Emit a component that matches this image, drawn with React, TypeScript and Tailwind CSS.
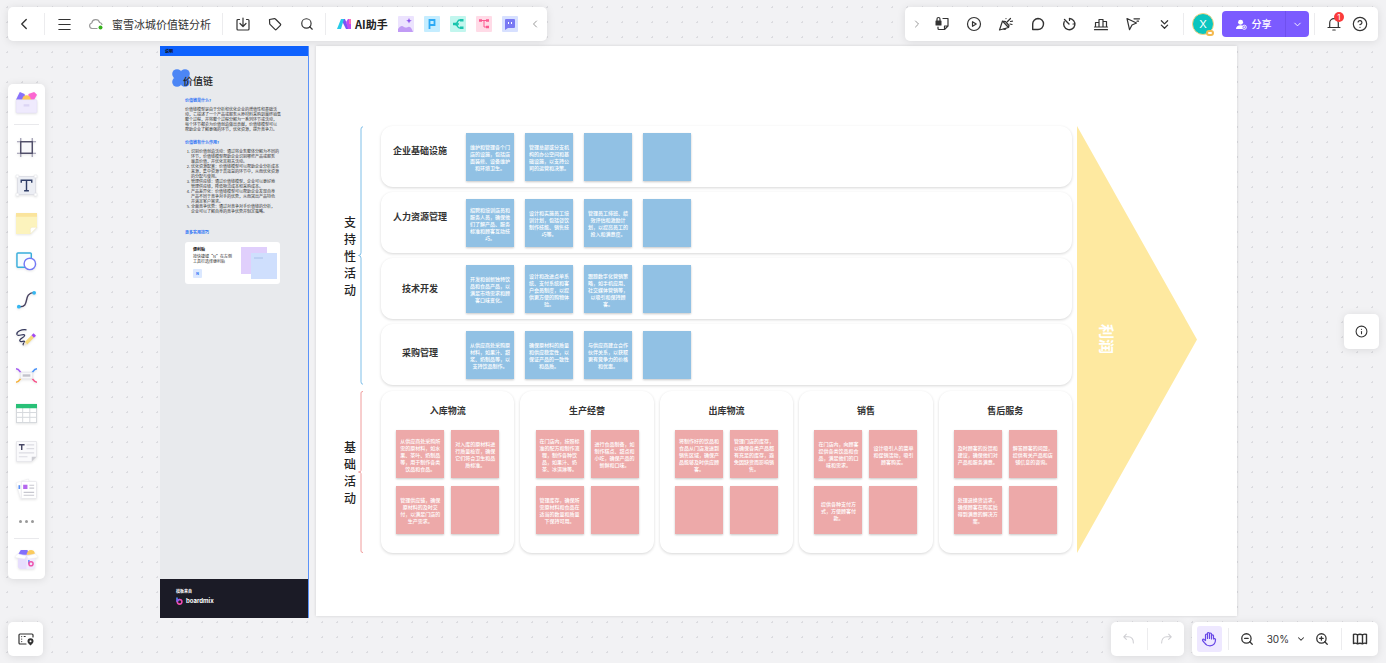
import type { ReactNode } from 'react';
import {
  ChevronDown,
  ChevronLeft,
  ChevronRight,
  ChevronsDown,
  CircleHelp,
  Info,
  Menu,
  Search,
  ZoomIn,
  ZoomOut,
} from 'lucide-react';

const supportRows = [
  {
    title: '企业基础设施',
    pad: 'pt-[18px]',
    notes: [
      '维护和管理各个门\n店的设施，包括店\n面装修、设备维护\n和环境卫生。',
      '管理总部或分支机\n构的办公空间和基\n础设施，以支持公\n司的运营和决策。',
      '',
      '',
    ],
  },
  {
    title: '人力资源管理',
    pad: 'pt-[18px]',
    notes: [
      '招聘和培训店员和\n服务人员，确保他\n们了解产品、服务\n标准和顾客互动技\n巧。',
      '设计和实施员工培\n训计划，包括餐饮\n制作技能、销售技\n巧等。',
      '管理员工排班、绩\n效评估和激励计\n划，以提高员工的\n投入和满意度。',
      '',
    ],
  },
  {
    title: '技术开发',
    pad: 'pt-[24px]',
    notes: [
      '开发和创新独特饮\n品和食品产品，以\n满足市场需求和顾\n客口味变化。',
      '设计和改进点单系\n统、支付系统和客\n户会员制度，以提\n供更方便的购物体\n验。',
      '跟踪数字化营销策\n略，如手机应用、\n社交媒体营销等，\n以吸引和保持顾\n客。',
      '',
    ],
  },
  {
    title: '采购管理',
    pad: 'pt-[22px]',
    notes: [
      '从供应商处采购原\n材料，如果汁、甜\n浆、奶制品等，以\n支持饮品制作。',
      '确保原材料的质量\n和供应稳定性，以\n保证产品的一致性\n和品质。',
      '与供应商建立合作\n伙伴关系，以获取\n更有竞争力的价格\n和优惠。',
      '',
    ],
  },
];

const basicColumns = [
  {
    title: '入库物流',
    notes: [
      '从供应商处采购所\n需的原材料，如水\n果、茶叶、奶制品\n等，用于制作各类\n饮品和食品。',
      '对入库的原材料进\n行质量检查，确保\n它们符合卫生和品\n质标准。',
      '管理供应链，确保\n原材料的及时交\n付，以满足门店的\n生产需求。',
      '',
    ],
  },
  {
    title: '生产经营',
    notes: [
      '在门店内，按照标\n准的配方和制作流\n程，制作各种饮\n品，如果汁、奶\n茶、冰淇淋等。',
      '进行食品制备，如\n制作糕点、甜点和\n小吃，确保产品的\n新鲜和口味。',
      '管理库存，确保所\n需原材料和食品在\n适当的数量和质量\n下保持可用。',
      '',
    ],
  },
  {
    title: '出库物流',
    notes: [
      '将制作好的饮品和\n食品从门店发送到\n销售区域，确保产\n品能够及时供应顾\n客。',
      '管理门店的库存，\n以确保各类产品都\n有充足的库存，避\n免因缺货而影响销\n售。',
      '',
      '',
    ],
  },
  {
    title: '销售',
    notes: [
      '在门店内，向顾客\n提供各类饮品和食\n品，满足他们的口\n味和需求。',
      '设计吸引人的菜单\n和促销活动，吸引\n顾客购买。',
      '提供各种支付方\n式，方便顾客付\n款。',
      '',
    ],
  },
  {
    title: '售后服务',
    notes: [
      '及时顾客的反馈和\n建议，确保他们对\n产品和服务满意。',
      '解答顾客的问题，\n提供有关产品和店\n铺信息的咨询。',
      '处理退换货请求，\n确保顾客在购买后\n得到满意的解决方\n案。',
      '',
    ],
  },
];

const usages = [
  '识别价值创造活动：通过将业务整体分解为不同的\n环节，价值链模型帮助企业识别哪些产品或服务\n最具价值，并优化其相关活动。',
  '优化资源配置：价值链模型可以帮助企业分析成本\n来源，集中资源于高效益的环节中，从而优化资源\n的分配与使用。',
  '管理供应链：通过价值链模型，企业可以更好地\n管理供应链，降低物流成本和采购成本。',
  '产品差异化：价值链模型可以帮助企业发现自身\n产品不同于竞争对手的优势，从而突出产品特色\n并满足客户需求。',
  '全面竞争优势：通过对竞争对手价值链的分析，\n企业可以了解自身的竞争优势并制定策略。',
];

type SvgProps = { children: ReactNode; size?: string };

function Glyph({ children, size = 'size-4' }: SvgProps) {
  return (
    <svg
      viewBox="0 0 16 16"
      className={`${size} shrink-0 overflow-visible`}
      fill="none"
      stroke="currentColor"
      strokeWidth="1.2"
      strokeLinecap="round"
      strokeLinejoin="round"
      aria-hidden="true"
    >
      {children}
    </svg>
  );
}

function IconButton({ label, className = 'w-8 h-full', children }: { label: string; className?: string; children: ReactNode }) {
  return (
    <button type="button" aria-label={label} className={`flex shrink-0 items-center justify-center ${className}`}>
      {children}
    </button>
  );
}

function Divider() {
  return <span className="block h-[22px] w-px shrink-0 bg-[#ececee]" />;
}

function Note({ text, color }: { text: string; color: string }) {
  return (
    <div
      className={`flex size-12 shrink-0 items-center justify-center text-center text-[5px] leading-[7px] font-medium whitespace-pre text-white shadow-[0_1px_2px_rgba(0,0,0,0.22)] ${color}`}
    >
      {text}
    </div>
  );
}

function SectionLabel({ text }: { text: string }) {
  return (
    <h2 className="flex w-3 flex-col justify-center text-[12px] leading-[17px] font-medium text-[#222]">
      {text.split('').map((c) => (
        <span key={c}>{c}</span>
      ))}
    </h2>
  );
}

function Brace({ color }: { color: string }) {
  return (
    <svg viewBox="0 0 5 100" preserveAspectRatio="none" className={`ml-[2px] w-[5px] self-stretch ${color}`} fill="none" stroke="currentColor" aria-hidden="true">
      <path d="M5 .3Q3 .3 3 1.2V49Q3 50 .5 50Q3 50 3 51V98.800Q3 99.700 5 99.700" vectorEffect="non-scaling-stroke" />
    </svg>
  );
}

const card = 'rounded-[12px] bg-white shadow-[0_1px_3px_rgba(0,0,0,0.16)]';

function GuidePanel() {
  return (
    <aside className="flex w-[149px] shrink-0 flex-col border-r border-[#5b93f8] bg-[#e8eaed] text-[4px] leading-[5px] text-[#333]">
      <div className="flex h-[10px] items-center bg-[#0f62fe] pl-[5px] font-bold text-[#111]">说明</div>
      <div className="flex-1 pl-[25px]">
        <div className="relative pt-[17px]">
          <svg viewBox="0 0 18 18" className="absolute top-[13px] -left-[13px] size-[18px] fill-[#4c86f5]" aria-hidden="true">
            <circle cx="5" cy="5" r="4.800" />
            <circle cx="13" cy="5" r="4.800" />
            <circle cx="5" cy="13" r="4.800" />
            <circle cx="13" cy="13" r="4.800" />
            <rect x="4" y="4" width="10" height="10" />
          </svg>
          <h1 className="relative -ml-0.5 text-[10px] leading-4 font-medium text-[#222]">价值链</h1>
        </div>
        <h3 className="mt-[9px] font-bold text-[#2f74f5]">价值链是什么?</h3>
        <p className="mt-1 whitespace-pre">
          {'价值链模型是由于分析和优化企业的增值性和基础活\n动，它描述了一个产品或服务从原材料采购到最终销售\n整个过程，并将整个过程分解为一系列环节或活动，\n每个环节都会为价值创造做出贡献，价值链模型可以\n帮助企业了解更强的环节，优化资源，提升竞争力。'}
        </p>
        <h3 className="mt-2 font-bold text-[#2f74f5]">价值链有什么作用?</h3>
        <ol className="mt-1 ml-[6px] list-decimal whitespace-pre">
          {usages.map((u) => (
            <li key={u}>{u}</li>
          ))}
        </ol>
        <h3 className="mt-4 font-bold text-[#2f74f5]">更多实用技巧</h3>
        <div className="mt-[7px] flex h-[42px] w-[95px] rounded-[3px] bg-white pl-2">
          <div className="pt-[5px]">
            <h4 className="font-bold text-[#111]">便利贴</h4>
            <p className="mt-[2px] w-9 whitespace-pre">{'按快捷键“N”在左侧\n工具栏选择便利贴'}</p>
            <span className="mt-[5px] flex size-[9px] items-center justify-center rounded-[1px] bg-[#dbe8ff] font-bold text-[#2f74f5]">N</span>
          </div>
          <svg viewBox="0 0 37 34" className="mt-1 ml-3 h-[34px] w-[37px]" aria-hidden="true">
            <rect x="0" y="1" width="26" height="27" fill="#e0cffc" />
            <rect x="10" y="7" width="26" height="26" fill="#cfdffd" />
            <path d="M13 12h9" stroke="#a9c0ea" />
          </svg>
        </div>
      </div>
      <footer className="flex h-[39px] flex-col bg-[#1b1b26] pt-[10px] pl-4 text-white">
        <span className="font-bold">模板来自</span>
        <span className="mt-[3px] flex items-center gap-[3px] font-['Inter',sans-serif] text-[6px] leading-2 font-bold">
          <svg viewBox="0 0 7 8" className="h-2 w-[7px]" fill="none" strokeWidth="1.600" aria-hidden="true">
            <path d="M1 .5v4.200" stroke="#4f8cff" />
            <circle cx="3.600" cy="4.800" r="2.300" stroke="#ef4bb0" />
            <path d="M1.300 4.800a2.300 2.300 0 0 1 2.300-2.300" stroke="#8b5cf6" />
          </svg>
          boardmix
        </span>
      </footer>
    </aside>
  );
}

function ValueChain() {
  return (
    <section className="flex flex-1 items-start gap-[5px] bg-white pt-[80px] pr-[40px] pl-7 shadow-[0_0_3px_rgba(0,0,0,0.14)]">
      <div className="flex flex-1 flex-col gap-[6px]">
        <div className="flex">
          <SectionLabel text="支持性活动" />
          <Brace color="text-[#7fbfe8]" />
          <div className="ml-[18px] flex flex-1 flex-col gap-[5px]">
            {supportRows.map((row) => (
              <div key={row.title} className={`flex h-[61px] gap-[11px] ${card}`}>
                <h3 className={`-mr-1 w-[78px] text-center text-[9px] leading-[14px] font-bold text-[#333] ${row.pad}`}>
                  {row.title}
                </h3>
                {row.notes.map((text, i) => (
                  <div key={i} className="pt-[7px]">
                    <Note text={text} color="bg-[#91c1e4]" />
                  </div>
                ))}
              </div>
            ))}
          </div>
        </div>
        <div className="flex">
          <SectionLabel text="基础活动" />
          <Brace color="text-[#f09c9c]" />
          <div className="ml-[18px] grid flex-1 grid-cols-5 gap-[6px]">
            {basicColumns.map((col) => (
              <div key={col.title} className={`flex h-[162px] flex-col items-center pt-[13px] ${card}`}>
                <h3 className="text-[9px] leading-[14px] font-bold text-[#333]">{col.title}</h3>
                <div className="mt-3 grid grid-cols-2 gap-x-[7px] gap-y-2">
                  {col.notes.map((text, i) => (
                    <Note key={i} text={text} color="bg-[#eda9a9]" />
                  ))}
                </div>
              </div>
            ))}
          </div>
        </div>
      </div>
      <div className="flex w-[120px] shrink-0 items-center self-start bg-[#fee9a0] [clip-path:polygon(0_0,100%_50%,0_100%)] h-[427px] pl-5">
        <h2 className="text-[15px] leading-5 font-bold text-white [text-orientation:sideways] [writing-mode:vertical-rl]">利润</h2>
      </div>
    </section>
  );
}

const bar = 'rounded-[5px] bg-white shadow-[0_1px_8px_rgba(0,0,0,0.10)]';

function TopLeftBar() {
  return (
    <header className={`absolute top-[7px] left-2 flex h-[34px] items-center text-[#333] ${bar}`}>
      <IconButton label="返回"><ChevronLeft size={18} strokeWidth={1.8} /></IconButton>
      <span className="ml-1"><Divider /></span>
      <IconButton label="菜单" className="ml-[3px] h-full w-8"><Menu size={17} strokeWidth={1.6} /></IconButton>
      <span className="flex w-8 justify-center text-[#999]">
        <Glyph>
          <path d="M9 12.500H4A2.800 2.800 0 0 1 3.800 7 4 4 0 0 1 11.600 6.500 3 3 0 0 1 14 8.500" />
          <circle cx="12.500" cy="11.500" r="2" fill="#35b11b" stroke="none" />
        </Glyph>
      </span>
      <span className="text-[11px] leading-4 whitespace-nowrap text-[#333]">蜜雪冰城价值链分析</span>
      <span className="ml-[11px]"><Divider /></span>
      <IconButton label="导出" className="ml-1 h-full w-8">
        <Glyph>
          <path d="M4.500 3.500H3a1 1 0 0 0-1 1V13a1 1 0 0 0 1 1h10a1 1 0 0 0 1-1V4.500a1 1 0 0 0-1-1h-1.500M8 2v8M5 7.500l3 3 3-3" />
        </Glyph>
      </IconButton>
      <IconButton label="标签">
        <Glyph>
          <path d="M2.500 3.500l5-.8a1 1 0 0 1 .9.300l5 5a1 1 0 0 1 0 1.400l-4 4a1 1 0 0 1-1.400 0l-5-5a1 1 0 0 1-.3-.8z" />
        </Glyph>
      </IconButton>
      <IconButton label="搜索" className="h-full w-[31px]"><Search size={14} strokeWidth={2} /></IconButton>
      <span className="ml-[3px]"><Divider /></span>
      <button type="button" className="ml-[11px] flex items-center gap-[3px] text-[11px] leading-4 font-bold whitespace-nowrap text-[#222]">
        <svg viewBox="0 0 15 12" className="h-3 w-[15px]" aria-hidden="true">
          <path d="M4 1h4l4 10H9z" fill="#7657f5" />
          <path d="M4 1h3L4 11H0z" fill="#27cbe8" />
          <path d="M9 4l2-3h3v10h-3z" fill="#c04df0" />
          <path d="M12 1h2v5h-2z" fill="#fb6fb4" />
        </svg>
        AI助手
      </button>
      <div className="ml-[10px] flex items-center gap-[10px]">
        <button type="button" aria-label="AI图片">
          <svg viewBox="0 0 16 16" className="size-4" aria-hidden="true">
            <rect width="16" height="16" rx="1" fill="#ece3fe" />
            <path d="M0 13q3-5 6-2 2 1 4 0 3-1 5 5H0z" fill="#c19bf5" />
            <path d="M11 2l.8 2 2 .8-2 .8-.8 2-.8-2-2-.8 2-.8z" fill="#8e53ee" />
          </svg>
        </button>
        <button type="button" aria-label="AI PPT">
          <svg viewBox="0 0 16 16" className="size-4" fill="none" aria-hidden="true">
            <rect width="16" height="16" rx="1" fill="#c5edff" />
            <path d="M5.500 13V4h5v5h-5" stroke="#2caaf5" strokeWidth="1.800" />
          </svg>
        </button>
        <button type="button" aria-label="AI思维导图">
          <svg viewBox="0 0 16 16" className="size-4" fill="none" stroke="#18c4ac" strokeWidth="1.400" aria-hidden="true">
            <rect width="16" height="16" rx="1" fill="#c2f6ee" stroke="none" />
            <path d="M4 8q3 0 4-3 .5-1 2-1M4 8h5M4 8q3 0 4 3 .5 1 2 1" />
            <path d="M10 4.200h3.500M10 11.800h3.500M3 8h3" strokeWidth="2.600" />
          </svg>
        </button>
        <button type="button" aria-label="AI流程图">
          <svg viewBox="0 0 16 16" className="size-4" fill="none" stroke="#fb5a91" aria-hidden="true">
            <rect width="16" height="16" rx="1" fill="#ffdbe7" stroke="none" />
            <path d="M5 4.500h6M8 4.500V11h3" />
            <path d="M3 4.500h3M10 4.500h3M10 11h3" strokeWidth="2.600" />
          </svg>
        </button>
        <button type="button" aria-label="AI对话">
          <svg viewBox="0 0 16 16" className="size-4" aria-hidden="true">
            <rect width="16" height="16" rx="1" fill="#d7e0ff" />
            <path d="M4 3h8a1 1 0 0 1 1 1v7a1 1 0 0 1-1 1H6l-3 2V4a1 1 0 0 1 1-1z" fill="#7979f3" />
            <path d="M6.500 6v2M9.500 6v2" stroke="#fff" />
          </svg>
        </button>
      </div>
      <IconButton label="收起" className="mr-0.5 ml-[7px] h-full w-5 text-[#999]"><ChevronLeft size={12} /></IconButton>
    </header>
  );
}

function TopRightBar() {
  return (
    <div className={`absolute top-[7px] right-2 flex h-[34px] items-center text-[#333] ${bar}`}>
      <IconButton label="展开" className="h-full w-[21px] pl-[3px] text-[#999]"><ChevronRight size={12} /></IconButton>
      <IconButton label="锁定">
        <Glyph>
          <path d="M9 2.500h5V10l-3.500 3.500H5a1 1 0 0 1-1-1V11M10.500 13.500V10H14" />
          <rect x="1.500" y="4.500" width="6" height="5" rx=".5" fill="currentColor" stroke="none" />
          <path d="M3 4.500V3a1.500 1.500 0 0 1 3 0v1.500" />
        </Glyph>
      </IconButton>
      <IconButton label="演示">
        <Glyph>
          <circle cx="8" cy="8" r="6.500" />
          <path d="M6.500 5.700v4.600L10.200 8z" />
        </Glyph>
      </IconButton>
      <IconButton label="庆祝">
        <Glyph>
          <path d="M4.500 5l6 6.500L1.500 14zM5.500 13c1.500.8 2.500 0 2.500-1M4.500 5l3 .5 3.500 4-.5 2M9.500 5.500l3-3M8 2.500v.1M12 8l2 .5M12.500 5.500l2-.3" />
        </Glyph>
      </IconButton>
      <IconButton label="评论" className="h-full w-[31px]">
        <Glyph>
          <path d="M8 2.500a5.500 5.500 0 1 1 0 11H2.700V8A5.400 5.400 0 0 1 8 2.500z" strokeWidth="1.400" />
        </Glyph>
      </IconButton>
      <IconButton label="计时">
        <Glyph>
          <path d="M8.500 2.500a5.600 5.600 0 1 1-5.300 3.200M8 8L3.500 3.500" strokeWidth="1.400" />
          <path d="M8.500 2.500v2M13.500 8h-1.500" />
        </Glyph>
      </IconButton>
      <IconButton label="投票">
        <Glyph>
          <path d="M2.500 11V6.500H6V11M6 11V3.500h4V11M10 11V5.500h3.500V11M1.500 11h13M1.500 13.700h13" />
        </Glyph>
      </IconButton>
      <IconButton label="光标">
        <Glyph>
          <path d="M2 2.500l9.500 4.500-4.500 2-2.500 4.700zM9 2.800h5.500M12 5.200h1.500" />
        </Glyph>
      </IconButton>
      <IconButton label="更多" className="h-full w-[31px]"><ChevronsDown size={15} strokeWidth={2} /></IconButton>
      <span className="ml-[3px]"><Divider /></span>
      <button type="button" aria-label="个人中心" className="relative ml-2 flex size-[22px] items-center justify-center rounded-full border border-[#f5d486] bg-[#0bc5bf] font-['Inter',sans-serif] text-[11px] text-white">
        X
        <span className="absolute -right-px -bottom-0.5 h-[6px] w-[8px] rounded-full border-2 border-[#f4b94e] bg-white" />
      </button>
      <div className="ml-2 flex h-[26px] items-stretch overflow-hidden rounded-[4px] bg-[#7b5bff] text-white">
        <button type="button" className="flex w-[63px] items-center justify-center gap-[5px] text-[10px] leading-4 font-medium whitespace-nowrap">
          <svg viewBox="0 0 12 12" className="size-[11px]" fill="currentColor" aria-hidden="true">
            <circle cx="5" cy="3.500" r="2.700" />
            <path d="M0 11c0-3 2-4.300 5-4.300l2 .3v4z" />
            <circle cx="9" cy="9" r="2.300" stroke="#fff" fill="#7b5bff" />
            <path d="M9 7.800v2.400M7.800 9h2.400" stroke="#fff" strokeWidth=".8" />
          </svg>
          分享
        </button>
        <button type="button" aria-label="分享选项" className="flex w-6 items-center justify-center border-l border-[#6f50ee]"><ChevronDown size={11} /></button>
      </div>
      <span className="ml-[5px]"><Divider /></span>
      <IconButton label="通知" className="relative ml-[6px] h-full w-[26px]">
        <Glyph>
          <path d="M2 11.500h12M3.700 11.300V7a4.300 4.300 0 0 1 8.600 0v4.300M6.800 14h2.400" />
        </Glyph>
        <span className="absolute top-[5px] right-[3px] flex size-[10px] items-center justify-center rounded-full bg-[#fb3b3b] font-['Inter',sans-serif] text-[8px] text-white">1</span>
      </IconButton>
      <IconButton label="帮助" className="mr-[5px] h-full w-[26px]"><CircleHelp size={16} strokeWidth={1.8} /></IconButton>
    </div>
  );
}

const toolIcons: { label: string; art: ReactNode }[] = [
  {
    label: '画框',
    art: (
      <>
        <path d="M5 1v20M17 1v20M1 5h20M1 17h20" stroke="#9694aa" strokeWidth="1.200" />
        <rect x="5" y="5" width="12" height="12" stroke="#45435f" strokeWidth="1.400" fill="#f8f8fb" />
      </>
    ),
  },
  {
    label: '文本',
    art: (
      <>
        <rect x="1.500" y="1.500" width="19" height="19" fill="#eceef4" stroke="#dcdde4" />
        <path d="M0 0h3v3H0zM19 0h3v3h-3zM0 19h3v3H0zM19 19h3v3h-3z" fill="#fff" stroke="#dedfe3" strokeWidth=".5" />
        <path d="M5.500 8V5.500h11V8M11 5.500v11M8.500 16.500h5" stroke="#2f3d66" strokeWidth="1.500" />
      </>
    ),
  },
  {
    label: '便利贴',
    art: (
      <>
        <path d="M0 0h22v15l-7 7H0z" fill="#fcf3bd" />
        <path d="M0 0h22v4H0z" fill="#fae49d" />
        <path d="M15 22v-5q0-2 2-2h5z" fill="#fff" stroke="#eee5b8" strokeWidth=".5" />
      </>
    ),
  },
  {
    label: '形状',
    art: (
      <>
        <rect x="1" y="2" width="15" height="15" rx="1" stroke="#37addb" strokeWidth="1.500" fill="#f6fcff" />
        <circle cx="14.500" cy="13.500" r="6" stroke="#7378f5" strokeWidth="1.500" fill="#fff" />
      </>
    ),
  },
  {
    label: '连线',
    art: (
      <>
        <path d="M3 18.500c13 1 3-14 16-15" stroke="#47415f" strokeWidth="1.500" />
        <circle cx="3" cy="18.500" r="2" fill="#35b7f1" />
        <circle cx="19" cy="4" r="2" fill="#35b7f1" />
      </>
    ),
  },
  {
    label: '画笔',
    art: (
      <>
        <path d="M11 3C6 2 0 5 1 8c1 2.500 7-1.500 8 .5S3 12 4 14.500s4-.5 5 .5-3 3-1 4" stroke="#34375b" strokeWidth="1.300" />
        <path d="M10.500 17l7-7" stroke="#f7d977" strokeWidth="3.500" />
        <path d="M17.500 10l2.200-2.200" stroke="#a24df1" strokeWidth="3.500" />
        <path d="M8 19.500l1-3.700 2.700 2.700z" fill="#eee5d5" />
      </>
    ),
  },
  {
    label: '思维导图',
    art: (
      <>
        <path d="M0 4c4 0 4 4 7 6" stroke="#a55df1" strokeWidth="1.500" />
        <path d="M22 4c-4 0-4 4-7 6" stroke="#4993fa" strokeWidth="1.500" />
        <path d="M0 18c4 0 4-4 7-6" stroke="#f6b33e" strokeWidth="1.500" />
        <path d="M22 18c-4 0-4-4-7-6" stroke="#f6558b" strokeWidth="1.500" />
        <rect x="4.500" y="7.500" width="13" height="7" rx="1" fill="#f8f8fa" stroke="#e8e8ed" />
        <path d="M7 11h8" stroke="#c3c3cb" strokeWidth="2.500" />
      </>
    ),
  },
  {
    label: '表格',
    art: (
      <>
        <rect x=".5" y="1.500" width="21" height="19" fill="#fff" stroke="#d4d7db" />
        <path d="M7 5v15M14.500 5v15M1 10h20M1 15h20" stroke="#d4d7db" />
        <path d="M0 1h22v4.500H0z" fill="#28c077" />
      </>
    ),
  },
  {
    label: '文档',
    art: (
      <>
        <path d="M.5.500h21v16l-5 5H.500z" fill="#fafafc" stroke="#e7e7eb" />
        <path d="M3 4h6M6 4v5.500" stroke="#484866" strokeWidth="1.500" />
        <path d="M11 4h8M11 8h8M3 12.500h16M3 16.500h9" stroke="#dcdce2" strokeWidth="1.200" />
        <path d="M16.500 21.500v-5h5z" fill="#ccccd2" />
      </>
    ),
  },
  {
    label: '卡片',
    art: (
      <>
        <path d="M0 4l13-4 4 16-12 5z" fill="#fff" stroke="#ececf0" strokeWidth=".6" />
        <path d="M3.500 6.500v4" stroke="#5990f6" strokeWidth="1.800" />
        <rect x="5.500" y="2.500" width="16" height="18" rx="1" fill="#fff" stroke="#e3e3e8" strokeWidth=".8" />
        <rect x="7.500" y="6" width="4.500" height="4.500" fill="#b568ee" />
        <path d="M14 6.500h5M14 9.500h5M8 14h11M8 17h11" stroke="#c7c7cf" strokeWidth="1.200" />
      </>
    ),
  },
];

function ToolArt({ children }: { children: ReactNode }) {
  return (
    <svg viewBox="0 0 22 22" className="size-[21px] overflow-visible drop-shadow-[0_1px_1px_rgba(0,0,0,0.10)]" fill="none" aria-hidden="true">
      {children}
    </svg>
  );
}

function ToolBar() {
  return (
    <nav aria-label="工具" className={`absolute top-[84px] left-2 flex w-[37px] flex-col items-center ${bar}`}>
      <IconButton label="模板" className="h-[37px] w-full">
        <ToolArt>
          <path d="M0 8l4-8 5 2 1 6z" fill="#8871fb" />
          <path d="M13 2l6-2 3 3-3 5h-6z" fill="#fb66d1" />
          <circle cx="11" cy="8" r="4.500" fill="#fdc75a" />
          <rect x="0" y="8" width="22" height="14" rx="1" fill="#efeafd" stroke="#ddd8ef" strokeWidth=".4" />
          <path d="M8 14h6" stroke="#dcd5f4" strokeWidth="2.500" />
        </ToolArt>
      </IconButton>
      <span className="mt-[3px] mb-[3px] h-px w-[25px] bg-[#e9e9ec]" />
      {toolIcons.map((tool) => (
        <IconButton key={tool.label} label={tool.label} className="h-[38px] w-full">
          <ToolArt>{tool.art}</ToolArt>
        </IconButton>
      ))}
      <IconButton label="更多工具" className="h-[26px] w-full gap-[3px]">
        <span className="size-[3px] rounded-full bg-[#999]" />
        <span className="size-[3px] rounded-full bg-[#999]" />
        <span className="size-[3px] rounded-full bg-[#999]" />
      </IconButton>
      <span className="mt-1 h-px w-[25px] bg-[#e9e9ec]" />
      <IconButton label="素材库" className="h-10 w-full">
        <ToolArt>
          <path d="M2 6l3-5h7l2 7H2z" fill="#8370fb" />
          <path d="M11 7c0-4 2-6 5-6s4 3 4 6z" fill="#fbcb5e" />
          <path d="M2 6h18v13l-2 2H4l-2-2z" fill="#e7defd" />
          <path d="M11 8l9-2v13l-2 2h-7z" fill="#f0eafe" />
          <path d="M-1 8l3-3 9 2.500-2 3-10-1.500zM23 8l-3-3-9 2.500 2 3 10-1.500z" fill="#fff" stroke="#e8e8ee" strokeWidth=".5" />
          <path d="M13.500 11.500v4" stroke="#5b7dfb" strokeWidth="1.500" />
          <circle cx="15.700" cy="15.500" r="2.200" stroke="#ee50a9" strokeWidth="1.500" />
        </ToolArt>
      </IconButton>
    </nav>
  );
}

function BottomBars() {
  return (
    <div className="absolute right-2 bottom-[7px] flex h-[34px] gap-2 text-[#333]">
      <div className={`flex items-center text-[#cfcfd3] ${bar}`}>
        <IconButton label="撤销" className="h-full w-9">
          <Glyph size="size-[14px]"><path d="M5 2.500L2 5.500l3 3M2.500 5.500h4.500c4 0 6 3 6 7" /></Glyph>
        </IconButton>
        <Divider />
        <IconButton label="重做" className="h-full w-9">
          <Glyph size="size-[14px]"><path d="M11 2.500l3 3-3 3M13.500 5.500H9c-4 0-6 3-6 7" /></Glyph>
        </IconButton>
      </div>
      <div className={`flex items-center pl-[5px] ${bar}`}>
        <IconButton label="移动" className="h-[26px] w-[25px] rounded-[3px] bg-[#eee8ff] text-[#6747e6]">
          <Glyph>
            <path d="M4.500 9.500V4a1 1 0 0 1 2 0v3.500V2.500a1 1 0 0 1 2 0v5V3a1 1 0 0 1 2 0v5V4.800a1 1 0 0 1 2 0V8a1.200 1.200 0 0 1 2 .5c0 3.500-1.500 6.300-5.500 6.300-3 0-4.500-1.300-5.500-3L1.600 9.500c-.4-1 .8-1.700 1.500-1z" />
          </Glyph>
        </IconButton>
        <span className="ml-[6px]"><Divider /></span>
        <IconButton label="缩小" className="ml-0.5 h-full w-8"><ZoomOut size={14} strokeWidth={2.2} /></IconButton>
        <button type="button" className="ml-1 flex items-center gap-[7px] font-['Inter',sans-serif] text-[10px] leading-4">
          30%
          <ChevronDown size={10} strokeWidth={2.5} />
        </button>
        <IconButton label="放大" className="h-full w-8"><ZoomIn size={14} strokeWidth={2.2} /></IconButton>
        <span className="ml-[3px]"><Divider /></span>
        <IconButton label="地图" className="h-full w-9">
          <Glyph>
            <path d="M1.500 3.500q2-.8 4 .3 2.500-1 5 0 2-1.100 4-.3v9q-2-.8-4 .3-2.500-1-5 0-2-1.100-4-.3zM5.500 3.800v9M10.500 3.800v9" strokeWidth="1.400" />
          </Glyph>
        </IconButton>
      </div>
    </div>
  );
}

export default function App() {
  return (
    <div className="relative min-h-screen overflow-hidden bg-[#f2f2f4] bg-[radial-gradient(circle,#dcdce0_1px,transparent_1px)] bg-[length:15px_15px] font-['Noto_Sans_CJK_SC',sans-serif]">
      <main className="flex gap-[7px] pt-[46px] pr-[149px] pb-11 pl-[160px]">
        <div className="flex h-[572px]"><GuidePanel /></div>
        <div className="flex h-[570px] flex-1"><ValueChain /></div>
      </main>
      <TopLeftBar />
      <TopRightBar />
      <ToolBar />
      <button type="button" aria-label="信息" className={`absolute top-[314px] right-[7px] flex size-[35px] items-center justify-center text-[#333] ${bar}`}>
        <Info size={13} strokeWidth={2} />
      </button>
      <button type="button" aria-label="导航面板" className={`absolute bottom-[7px] left-2 flex h-[34px] w-[35px] items-center justify-center text-[#333] ${bar}`}>
        <Glyph>
          <path d="M8 13H2a1 1 0 0 1-1-1V4a1 1 0 0 1 1-1h12a1 1 0 0 1 1 1v2M3.700 5.500v.1M3.700 8v.1M3.700 10.500v.1M6.200 5.500h1" />
          <path d="M12.500 14.500c-2-2-3-3-3-4.300a3 3 0 0 1 6 0c0 1.300-1 2.300-3 4.300z" fill="currentColor" stroke="none" />
          <circle cx="12.500" cy="10.200" r="1" fill="#fff" stroke="none" />
        </Glyph>
      </button>
      <BottomBars />
    </div>
  );
}
